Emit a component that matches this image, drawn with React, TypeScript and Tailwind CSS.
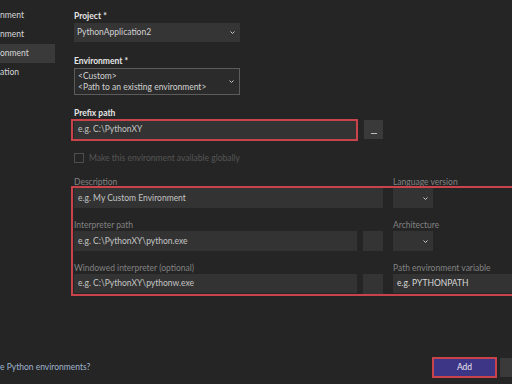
import React from 'react';

const Chevron = () => (
  <svg width="5" height="3" viewBox="0 0 5 3" className="shrink-0">
    <path d="M0.5 0.5 L2.5 2.5 L4.5 0.5" stroke="#c8c8c8" strokeWidth="1" fill="none" />
  </svg>
);

const Label = ({ children, bold = false, dim = false }: { children: React.ReactNode; bold?: boolean; dim?: boolean }) => (
  <div
    className={`h-[12px] leading-[12px] text-[8.5px] whitespace-nowrap ${bold ? 'font-bold text-[#e6e6e6]' : ''} ${dim ? 'text-[#828282]' : ''}`}
  >
    {children}
  </div>
);

const Field = ({ text, className = '' }: { text?: string; className?: string }) => (
  <div className={`bg-[#333333] flex items-center pl-[4px] text-[8.5px] text-[#c4c4c4] whitespace-nowrap overflow-hidden ${className}`}>
    {text}
  </div>
);

const SmallDrop = () => (
  <div className="h-[20px] w-[40px] bg-[#333333] flex items-center justify-end pr-[5px]">
    <Chevron />
  </div>
);

const Dots = () => <div className="h-[20px] w-[20px] bg-[#343434]" />;

export default function App() {
  const sidebar = ['nment', 'nment', 'onment', 'ation'];
  return (
    <div
      className="relative w-[512px] h-[384px] bg-[#252525] overflow-hidden flex text-[#d6d6d6]"
      style={{ fontFamily: 'Lato, "Noto Sans", sans-serif' }}
    >
      {/* left nav, scrolled off to the left */}
      <div className="w-[55px] shrink-0 pt-[6px] flex flex-col">
        {sidebar.map((s, i) => (
          <div
            key={i}
            className={`h-[19px] leading-[19px] text-[8.5px] whitespace-nowrap ${i === 2 ? 'bg-[#3a3a3a]' : ''}`}
          >
            {s}
          </div>
        ))}
      </div>

      {/* form */}
      <div className="ml-[19px] pt-[10px] flex flex-col">
        <Label bold>Project *</Label>
        <div className="mt-[1px] w-[166px] h-[19px] bg-[#353535] flex items-center justify-between pl-[3px] pr-[5px] text-[8.5px] text-[#d2d2d2]">
          <span>PythonApplication2</span>
          <Chevron />
        </div>

        <div className="mt-[13px]">
          <Label bold>Environment *</Label>
        </div>
        <div className="mt-[1px] w-[166px] h-[27px] border border-[#5c5c5c] bg-[#2b2b2b] flex items-center justify-between pl-[3px] pr-[5px] text-[8.5px] leading-[11px] text-[#d2d2d2]">
          <div>
            <div>&lt;Custom&gt;</div>
            <div>&lt;Path to an existing environment&gt;</div>
          </div>
          <Chevron />
        </div>

        <div className="mt-[12px]">
          <Label bold>Prefix path</Label>
        </div>
        <div className="mt-[1px] flex items-center gap-[7px]">
          <Field text="e.g. C:\PythonXY" className="w-[283px] h-[19px]" />
          <div className="w-[19px] h-[19px] bg-[#3a3a3a] flex items-end justify-center pb-[5px]">
            <div className="w-[6px] h-[1px] bg-[#bcbcbc]" />
          </div>
        </div>

        <div className="mt-[14px] h-[10px] flex items-center gap-[5px]">
          <div className="w-[10px] h-[10px] border border-[#4e4e4e]" />
          <span className="text-[8.5px] leading-[10px] text-[#555555] whitespace-nowrap">Make this environment available globally</span>
        </div>

        <div className="mt-[13px] flex gap-[10px]">
          <div className="w-[309px] flex flex-col">
            <Label dim>Description</Label>
            <Field text="e.g. My Custom Environment" className="h-[20px]" />
            <div className="mt-[11px]">
              <Label dim>Interpreter path</Label>
            </div>
            <div className="flex gap-[6px]">
              <Field text="e.g. C:\PythonXY\python.exe" className="w-[283px] h-[20px]" />
              <Dots />
            </div>
            <div className="mt-[11px]">
              <Label dim>Windowed interpreter (optional)</Label>
            </div>
            <div className="flex gap-[6px]">
              <Field text="e.g. C:\PythonXY\pythonw.exe" className="w-[283px] h-[19px]" />
              <Dots />
            </div>
          </div>
          <div className="w-[130px] flex flex-col">
            <Label dim>Language version</Label>
            <SmallDrop />
            <div className="mt-[11px]">
              <Label dim>Architecture</Label>
            </div>
            <SmallDrop />
            <div className="mt-[11px]">
              <Label dim>Path environment variable</Label>
            </div>
            <Field text="e.g. PYTHONPATH" className="h-[19px] text-[#d8d8d8]" />
          </div>
        </div>
      </div>

      {/* footer */}
      <div className="absolute left-0 bottom-[10px] text-[8.5px] text-[#9fb3cc] whitespace-nowrap">e Python environments?</div>
      <div className="absolute left-[433px] top-[358px] w-[63px] h-[19px] bg-[#3d3585] flex items-center justify-center text-[8.5px] text-[#e8e6f2]">
        Add
      </div>
      <div className="absolute left-[500px] top-[358px] w-[20px] h-[19px] bg-[#3a3a3a]" />

      {/* red annotation frames */}
      <div className="absolute left-[71px] top-[119px] w-[287px] h-[22px] border-2 border-[#c9434a]" />
      <div className="absolute left-[71px] top-[186px] w-[450px] h-[110px] border-2 border-[#c9434a]" />
      <div className="absolute left-[432px] top-[357px] w-[65px] h-[21px] border-2 border-[#c9434a]" />
    </div>
  );
}
